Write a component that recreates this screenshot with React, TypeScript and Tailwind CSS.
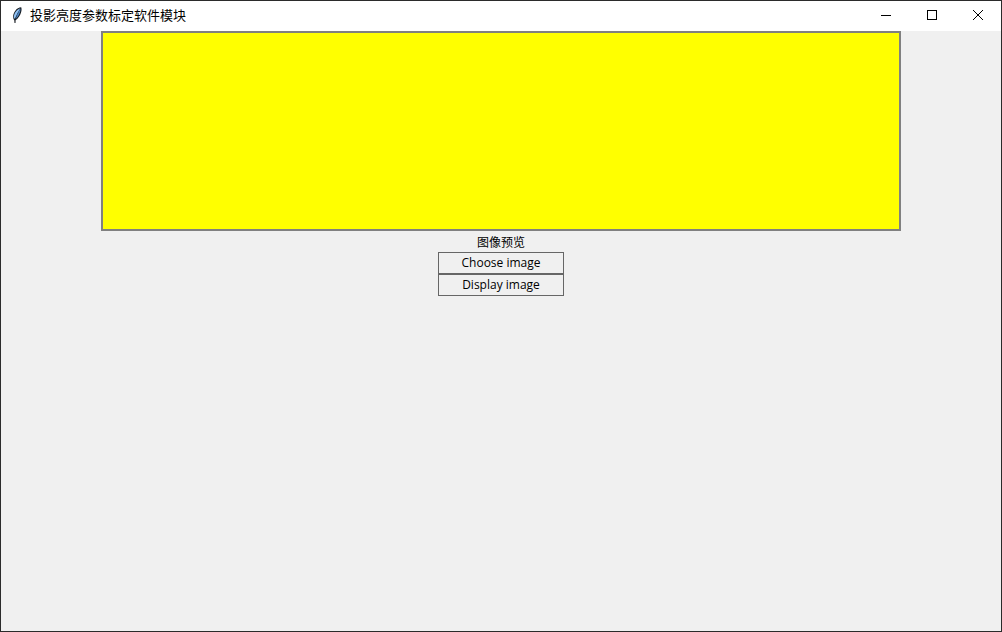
import React from "react";

function FeatherIcon() {
  return (
    <svg width="16" height="16" viewBox="0 0 16 16" aria-hidden="true">
      <path d="M5.500 16 5.300 13.200C3.400 10.500 4 6.500 6.500 3.400 8 1.500 10 .4 12.200.3c.6 1.800.4 3.500-.2 5.200C11.200 8.500 9.200 11.300 6.600 13.300L6.500 16Z" fill="#14191f" />
      <path d="M11.300 1.200C7.500 2.700 4.700 6.500 4.800 10.600L5.900 11.900 8.400 6.600Z" fill="#8fc0f2" />
      <path d="M11.500 1.500C11.700 5.300 9.700 9 6.700 12L8.200 7Z" fill="#4f87c8" />
      <path d="M9.500 5 5.800 12.500" stroke="#24405f" strokeWidth=".5" />
    </svg>
  );
}

const caption = "flex h-full w-[46px] items-center justify-center hover:bg-gray-200";
const action = "h-[22px] w-[126px] border border-[#666666] bg-[#f0f0f0] text-center font-['Open_Sans',sans-serif] text-[12px] leading-4 hover:bg-gray-200";

export default function App() {
  return (
    <div className="flex min-h-screen flex-col border border-[#2b2b2b] bg-[#f0f0f0] font-['Noto_Sans_CJK_SC',sans-serif] text-[12px] text-black">
      <header className="flex h-[30px] items-center bg-white pb-[2px] pl-2">
        <FeatherIcon />
        <h1 className="ml-[5px] flex-1 text-[13px] leading-4">投影亮度参数标定软件模块</h1>
        <div className="flex h-full">
          <button type="button" aria-label="Minimize" className={caption}>
            <svg width="10" height="10" shapeRendering="crispEdges"><path d="M0 5.500h10" stroke="#000" /></svg>
          </button>
          <button type="button" aria-label="Maximize" className={caption}>
            <svg width="10" height="10" shapeRendering="crispEdges"><path d="M.5.5h9v9h-9z" fill="none" stroke="#000" /></svg>
          </button>
          <button type="button" aria-label="Close" className={caption}>
            <svg width="10" height="10"><path d="m0 0 10 10M10 0 0 10" stroke="#000" /></svg>
          </button>
        </div>
      </header>
      <main className="flex flex-1 flex-col items-center">
        <div className="h-[200px] w-4/5 border-2 border-[#808080] bg-[#ffff00]" />
        <p className="flex h-[21px] items-center leading-4">图像预览</p>
        <button type="button" className={action}>Choose image</button>
        <button type="button" className={action}>Display image</button>
      </main>
    </div>
  );
}
